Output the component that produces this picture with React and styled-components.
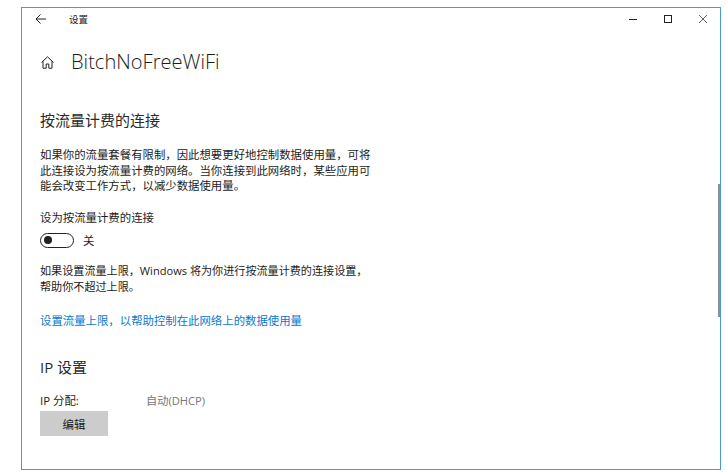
import React from "react";
import styled, { createGlobalStyle } from "styled-components";

const GlobalStyle = createGlobalStyle`
  html, body {
    margin: 0;
    background: #fff;
  }
  body {
    font-family: "Open Sans", "Noto Sans CJK SC", sans-serif;
    color: #1a1a1a;
  }
`;

const Page = styled.div`
  width: 726px;
  height: 474px;
  padding: 7px 0 0 21px;
  box-sizing: border-box;
  overflow: hidden;
`;

const Window = styled.div`
  position: relative;
  width: 700px;
  height: 463px;
  box-sizing: border-box;
  border: 1px solid #4a9ad8;
  background: #fff;
  display: flex;
  flex-direction: column;
`;

const TitleBar = styled.div`
  height: 22px;
  display: flex;
  align-items: center;
  padding-left: 13px;
`;

const BackButton = styled.div`
  width: 12px;
  height: 12px;
  display: flex;
`;

const AppName = styled.div`
  margin-left: 22px;
  font-size: 9.5px;
  color: #222;
`;

const WindowControls = styled.div`
  margin-left: auto;
  width: 92px;
  display: flex;
  justify-content: space-between;
  align-items: center;
  padding-right: 12px;
  box-sizing: border-box;
`;

const Content = styled.div`
  padding: 0 0 0 18px;
  display: flex;
  flex-direction: column;
  align-items: flex-start;
`;

const PageHeader = styled.div`
  display: flex;
  align-items: center;
  margin-top: 15px;
  height: 34px;
`;

const HomeIcon = styled.div`
  width: 15px;
  height: 15px;
  display: flex;
`;

const PageTitle = styled.h1`
  margin: 0 0 0 16px;
  font-size: 20.1px;
  font-weight: 300;
  line-height: 34px;
  color: #1c1c1c;
`;

const SectionTitle = styled.h2`
  margin: ${(p) => p.$top}px 0 0;
  font-size: 15px;
  line-height: 22px;
  font-weight: 400;
  color: #2a2a2a;
`;

const Paragraph = styled.p`
  margin: ${(p) => p.$top}px 0 0;
  width: 334px;
  font-size: ${(p) => (p.$tight ? "11.1px" : "11.4px")};
  line-height: 15.5px;
  color: #1c1c1c;
`;

const ToggleRow = styled.div`
  display: flex;
  align-items: center;
  margin-top: 7px;
`;

const ToggleTrack = styled.div`
  width: 34px;
  height: 15px;
  box-sizing: border-box;
  border: 1.5px solid #222;
  border-radius: 8px;
  display: flex;
  align-items: center;
  padding-left: 3px;
`;

const ToggleKnob = styled.div`
  width: 8px;
  height: 8px;
  border-radius: 50%;
  background: #222;
`;

const ToggleLabel = styled.span`
  margin-left: 9px;
  font-size: 11.4px;
  color: #1c1c1c;
`;

const TextLink = styled.a`
  margin-top: 19px;
  font-size: 11.4px;
  line-height: 16px;
  color: #0a78d0;
`;

const InfoRow = styled.div`
  display: flex;
  margin-top: 15px;
  font-size: 11.4px;
  line-height: 16px;
`;

const InfoLabel = styled.span`
  width: 106px;
  color: #1c1c1c;
`;

const InfoValue = styled.span`
  color: #777;
  font-size: 11.2px;
`;

const EditButton = styled.button`
  width: 68px;
  height: 25px;
  margin-top: 2px;
  padding: 0;
  border: 0;
  background: #cccccc;
  font-family: inherit;
  font-size: 11.4px;
  color: #1c1c1c;
`;

const ScrollThumb = styled.div`
  position: absolute;
  right: 0;
  top: 176px;
  width: 2px;
  height: 133px;
  background: #8f8f8f;
`;

export default function App() {
  return (
    <Page>
      <GlobalStyle />
      <Window>
        <TitleBar>
          <BackButton>
            <svg width="12" height="12" viewBox="0 0 12 12" fill="none" stroke="#222" strokeWidth="1">
              <path d="M1 6h10M5.5 1.5L1 6l4.5 4.5" />
            </svg>
          </BackButton>
          <AppName>设置</AppName>
          <WindowControls>
            <svg width="10" height="10" viewBox="0 0 10 10" stroke="#222" strokeWidth="1">
              <path d="M1 5.5h8" />
            </svg>
            <svg width="10" height="10" viewBox="0 0 10 10" fill="none" stroke="#222" strokeWidth="1">
              <rect x="1.5" y="1.5" width="7" height="7" />
            </svg>
            <svg width="10" height="10" viewBox="0 0 10 10" stroke="#333" strokeWidth="0.8">
              <path d="M1 1l8 8M9 1l-8 8" />
            </svg>
          </WindowControls>
        </TitleBar>
        <Content>
          <PageHeader>
            <HomeIcon>
              <svg width="15" height="15" viewBox="0 0 15 15" fill="none" stroke="#222" strokeWidth="1">
                <path d="M1.5 7.5L7.5 1.8l6 5.7M3 6.2v7h3.2V9h2.6v4.2H12V6.2" />
              </svg>
            </HomeIcon>
            <PageTitle>BitchNoFreeWiFi</PageTitle>
          </PageHeader>
          <SectionTitle $top={30}>按流量计费的连接</SectionTitle>
          <Paragraph $top={16}>
            如果你的流量套餐有限制，因此想要更好地控制数据使用量，可将此连接设为按流量计费的网络。当你连接到此网络时，某些应用可能会改变工作方式，以减少数据使用量。
          </Paragraph>
          <Paragraph $top={16}>设为按流量计费的连接</Paragraph>
          <ToggleRow>
            <ToggleTrack>
              <ToggleKnob />
            </ToggleTrack>
            <ToggleLabel>关</ToggleLabel>
          </ToggleRow>
          <Paragraph $top={15} $tight>
            如果设置流量上限，Windows 将为你进行按流量计费的连接设置，帮助你不超过上限。
          </Paragraph>
          <TextLink>设置流量上限，以帮助控制在此网络上的数据使用量</TextLink>
          <SectionTitle $top={27}>IP 设置</SectionTitle>
          <InfoRow>
            <InfoLabel>IP 分配:</InfoLabel>
            <InfoValue>自动(DHCP)</InfoValue>
          </InfoRow>
          <EditButton>编辑</EditButton>
        </Content>
        <ScrollThumb />
      </Window>
    </Page>
  );
}
